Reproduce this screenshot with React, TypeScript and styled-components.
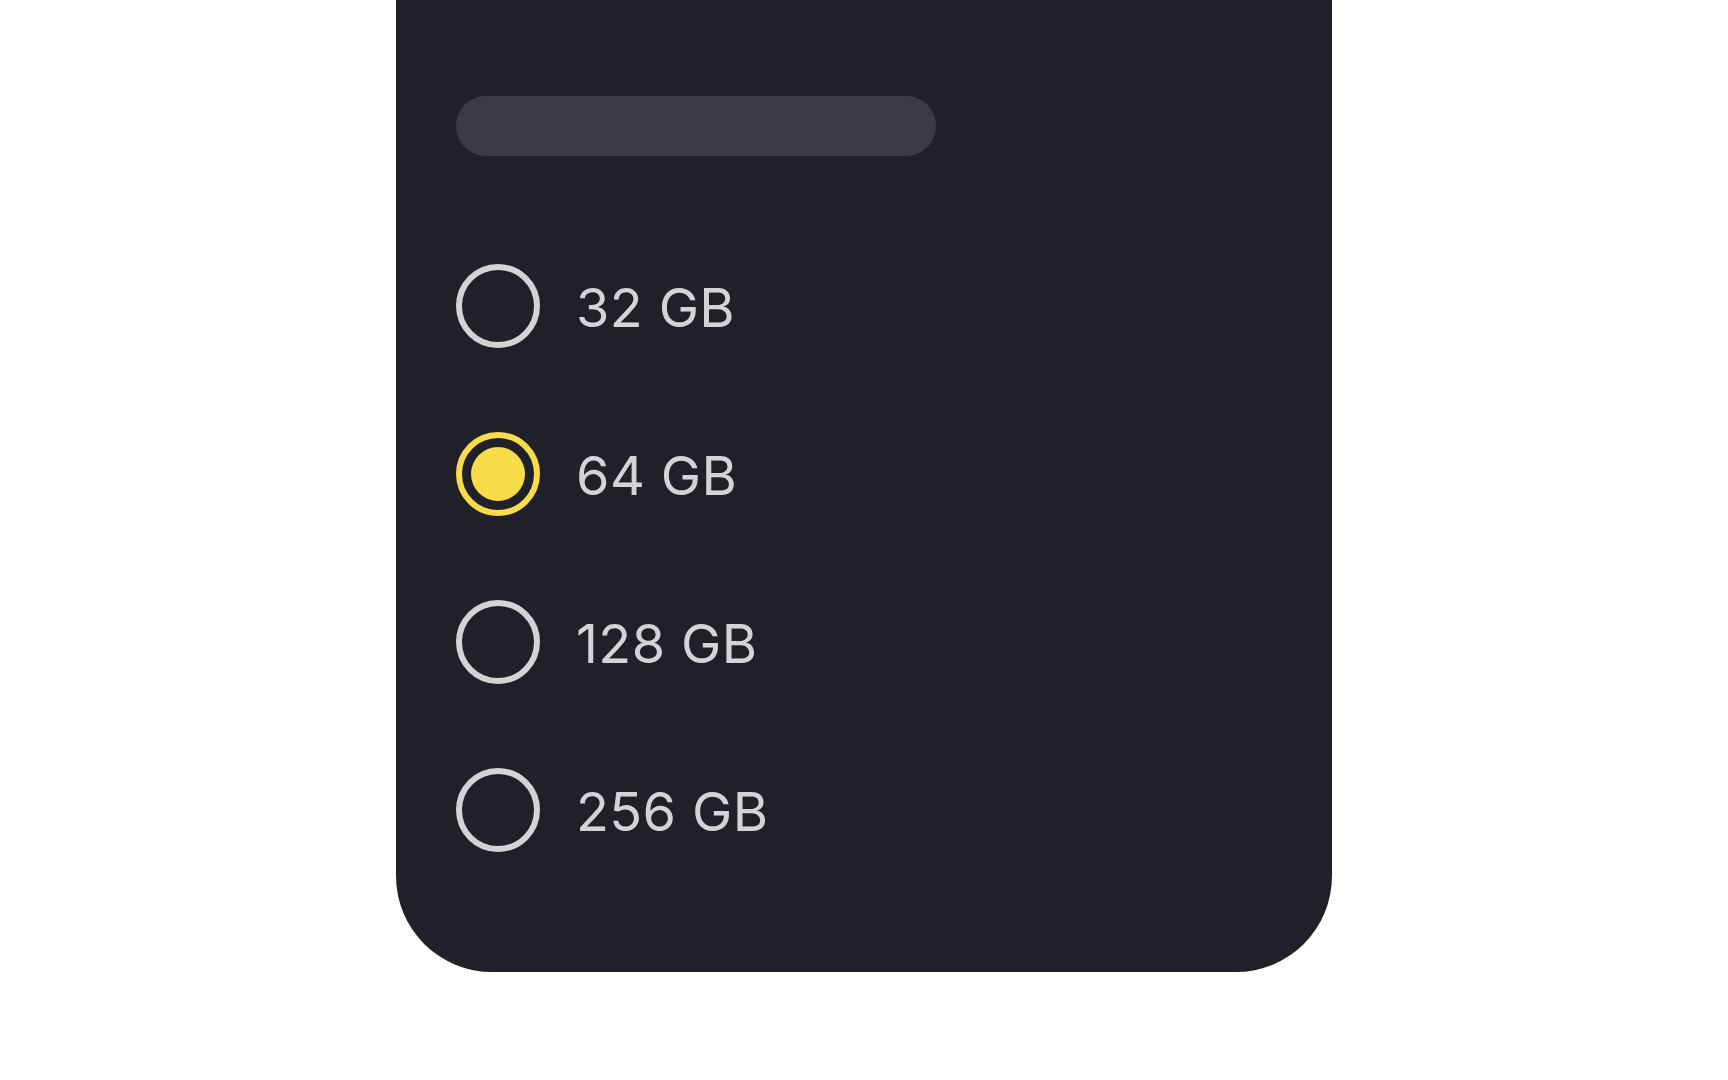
import React, { useState } from 'react'
import styled, { createGlobalStyle } from 'styled-components'

const options = ['32 GB', '64 GB', '128 GB', '256 GB']

const GlobalStyle = createGlobalStyle`
  html, body {
    margin: 0;
    padding: 0;
    background: #ffffff;
  }
  body {
    font-family: Inter, 'Noto Sans', 'Liberation Sans', sans-serif;
  }
`

const Page = styled.div`
  display: flex;
  justify-content: center;
  min-height: 1080px;
`

const Card = styled.div`
  box-sizing: border-box;
  width: 936px;
  height: 972px;
  padding: 96px 60px 0;
  background: #202029;
  border-radius: 0 0 96px 96px;
`

const TitleSkeleton = styled.div`
  width: 480px;
  height: 60px;
  border-radius: 30px;
  background: #3b3b45;
`

const OptionList = styled.div`
  display: flex;
  flex-direction: column;
  gap: 84px;
  margin-top: 108px;
`

const OptionRow = styled.label`
  display: flex;
  align-items: center;
  gap: 36px;
  cursor: pointer;
`

const Radio = styled.span<{ $checked: boolean }>`
  box-sizing: border-box;
  display: flex;
  align-items: center;
  justify-content: center;
  width: 84px;
  height: 84px;
  flex-shrink: 0;
  border-radius: 50%;
  border: 6px solid ${(p) => (p.$checked ? '#f9dc4a' : '#d4d4d8')};
`

const Dot = styled.span`
  width: 54px;
  height: 54px;
  border-radius: 50%;
  background: #f9dc4a;
`

const OptionLabel = styled.span`
  padding-top: 3px;
  font-size: 54px;
  line-height: 1;
  color: #d4d4d8;
  letter-spacing: 0.4px;
`

export default function App() {
  const [selected, setSelected] = useState('64 GB')
  return (
    <Page>
      <GlobalStyle />
      <Card>
        <TitleSkeleton />
        <OptionList>
          {options.map((opt) => (
            <OptionRow key={opt} onClick={() => setSelected(opt)}>
              <Radio $checked={selected === opt}>{selected === opt && <Dot />}</Radio>
              <OptionLabel>{opt}</OptionLabel>
            </OptionRow>
          ))}
        </OptionList>
      </Card>
    </Page>
  )
}
